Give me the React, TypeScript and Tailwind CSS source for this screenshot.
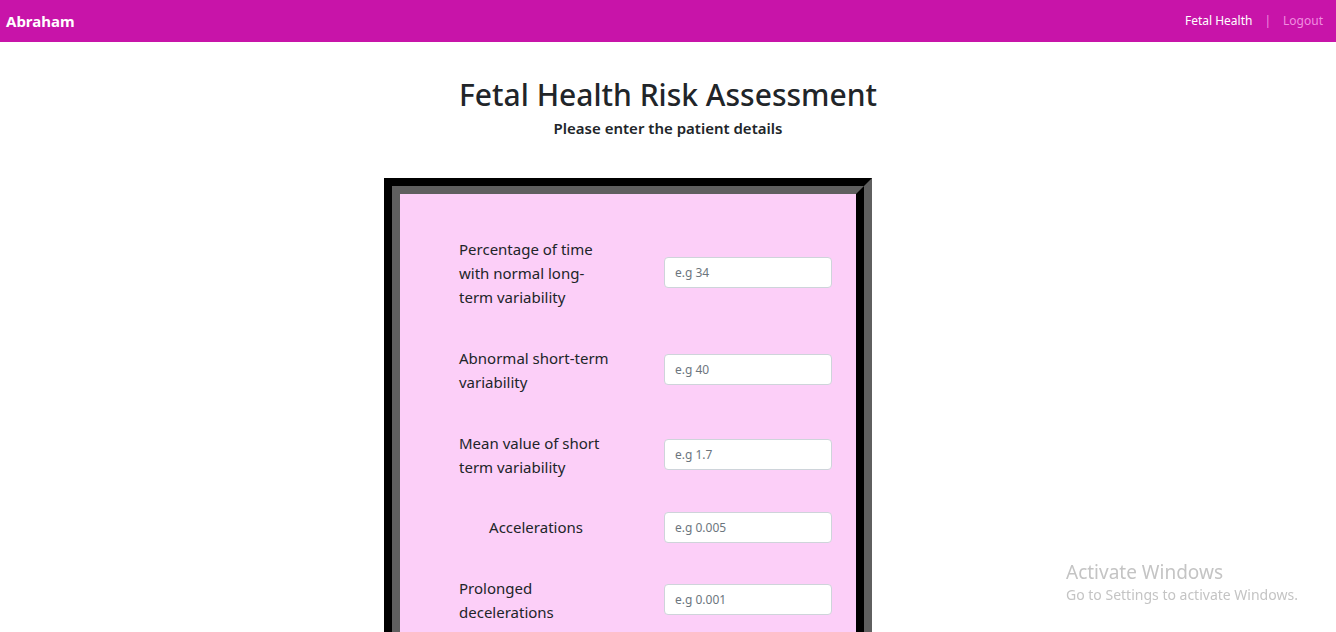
const fields = [
  { label: 'Percentage of time with normal long-term variability', placeholder: 'e.g 34', mt: 'mt-0' },
  { label: 'Abnormal short-term variability', placeholder: 'e.g 40', mt: 'mt-[37px]' },
  { label: 'Mean value of short term variability', placeholder: 'e.g 1.7', mt: 'mt-[37px]' },
  { label: 'Accelerations', placeholder: 'e.g 0.005', mt: 'mt-[33px]', center: true },
  { label: 'Prolonged decelerations', placeholder: 'e.g 0.001', mt: 'mt-[33px]' },
];

export default function App() {
  return (
    <div className="min-h-screen bg-white font-['Noto_Sans','Open_Sans',sans-serif] text-[#212529]">
      {/* Navbar */}
      <nav className="h-[42px] bg-[#c814a9] flex items-center justify-between pl-[6px] pr-[13px]">
        <span className="text-white font-bold text-[15px]">Abraham</span>
        <div className="flex items-center text-[12px]">
          <a className="text-white">Fetal Health</a>
          <span className="text-[#f08ee0] mx-[12px]">|</span>
          <a className="text-[#f08ee0]">Logout</a>
        </div>
      </nav>

      {/* Heading */}
      <div className="text-center mt-[32px]">
        <h1 className="text-[30px] font-medium leading-[42px]">Fetal Health Risk Assessment</h1>
        <p className="text-[15px] font-semibold mt-[1px]">Please enter the patient details</p>
      </div>

      {/* Form card */}
      <div className="flex justify-center mt-[38px] pr-[80px]">
        <div className="w-[488px] border-8 border-t-black border-l-black border-r-[#5f5f5f] border-b-[#5f5f5f]">
          <div className="border-8 border-t-[#5f5f5f] border-l-[#5f5f5f] border-r-black border-b-black bg-[#fccff8] pt-[43px] pb-[40px] pl-[59px] pr-[24px]">
            {fields.map((f) => (
              <div key={f.label} className={`flex items-center justify-between ${f.mt}`}>
                <label
                  className={`w-[154px] text-[15px] leading-[24px] ${f.center ? 'text-center' : ''}`}
                >
                  {f.label}
                </label>
                <input
                  placeholder={f.placeholder}
                  className="w-[168px] h-[31px] rounded-[4px] border border-[#ced4da] bg-white px-[10px] text-[12px] placeholder:text-[#6c757d] outline-none"
                />
              </div>
            ))}
          </div>
        </div>
      </div>

      {/* Windows watermark */}
      <div className="fixed left-[1066px] top-[560px] text-[#c4c4c4] pointer-events-none">
        <div className="text-[19px] leading-[24px]">Activate Windows</div>
        <div className="text-[14px] leading-[20px] mt-[1px]">Go to Settings to activate Windows.</div>
      </div>
    </div>
  );
}
